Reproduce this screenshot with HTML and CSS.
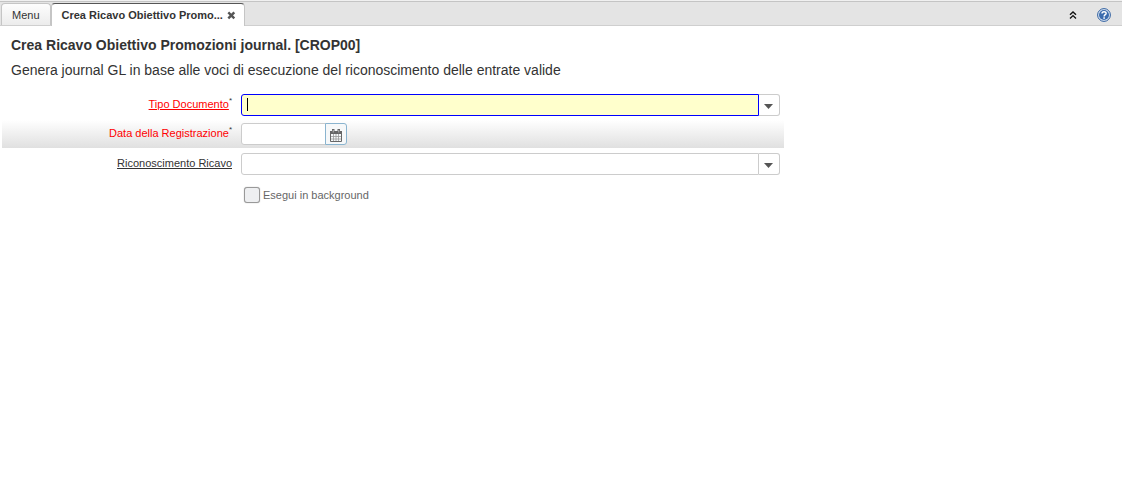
FILE: index.html
```html
<!DOCTYPE html>
<html lang="it">
<head>
<meta charset="utf-8">
<title>Crea Ricavo Obiettivo Promozioni journal</title>
<link rel="stylesheet" href="styles.css">
</head>
<body>
<header class="tabbar">
  <nav class="tabs">
    <button class="tab" type="button">Menu</button>
    <div class="tab tab-active">
      <button class="tab-title" type="button">Crea Ricavo Obiettivo Promo...</button>
      <button class="tab-close" type="button" aria-label="Chiudi">
        <svg width="9" height="9" viewBox="0 0 9 9"><path d="M1.3 1.3 7.3 7.3M7.3 1.3 1.3 7.3" stroke="#555" stroke-width="2.4"/></svg>
      </button>
    </div>
  </nav>
  <div class="tools">
    <button class="tool" type="button" aria-label="Comprimi">
      <svg width="8" height="8" viewBox="0 0 8 8"><path d="M1 3.8 4 1 7 3.8M1 7.4 4 4.6 7 7.4" fill="none" stroke="#111" stroke-width="1.4"/></svg>
    </button>
    <button class="tool" type="button" aria-label="Aiuto">
      <svg width="14" height="14" viewBox="0 0 14 14"><circle cx="7" cy="7" r="6.4" fill="#dfe8f4" stroke="#2f5f9f" stroke-width="1"/><circle cx="7" cy="7" r="5" fill="#3c6cae"/><path d="M5 5.6C5 3 9.2 3.100 9.100 5.400 9 6.700 7.100 6.800 7.100 8.500" fill="none" stroke="#fff" stroke-width="1.500"/><rect x="6.300" y="9.300" width="1.600" height="1.500" fill="#fff"/></svg>
    </button>
  </div>
</header>
<main class="content">
  <h1 class="title">Crea Ricavo Obiettivo Promozioni journal. [CROP00]</h1>
  <p class="description">Genera journal GL in base alle voci di esecuzione del riconoscimento delle entrate valide</p>
  <form class="form">
    <div class="row">
      <div class="label-cell"><label class="label required linked" for="doctype">Tipo Documento</label><sup class="mark">*</sup></div>
      <div class="combo">
        <input class="field field-focus" id="doctype" type="text">
        <button class="drop" type="button" aria-label="Apri elenco"><svg width="9" height="5" viewBox="0 0 9 5"><path d="M0 0H9L4.500 5Z" fill="#555"/></svg></button>
      </div>
    </div>
    <div class="row row-shaded">
      <div class="label-cell"><label class="label required" for="regdate">Data della Registrazione</label><sup class="mark">*</sup></div>
      <div class="combo combo-date">
        <input class="field" id="regdate" type="text">
        <button class="drop drop-date" type="button" aria-label="Calendario"><svg width="12" height="13" viewBox="0 0 12 13"><path d="M.5 4V12.500H11.500V4" fill="none" stroke="#666"/><path d="M1 7.500H11M1 10H11M3.500 5V12M6 5V12M8.500 5V12" fill="none" stroke="#999" stroke-width=".8"/><path d="M0 2H12V5H0ZM2 0H4.500V3H2ZM7.500 0H10V3H7.500Z" fill="#666"/><path d="M3.250 1V3.500M8.750 1V3.500" stroke="#ccc" stroke-width=".8"/></svg></button>
      </div>
    </div>
    <div class="row">
      <div class="label-cell"><label class="label linked" for="recognition">Riconoscimento Ricavo</label></div>
      <div class="combo">
        <input class="field" id="recognition" type="text">
        <button class="drop" type="button" aria-label="Apri elenco"><svg width="9" height="5" viewBox="0 0 9 5"><path d="M0 0H9L4.500 5Z" fill="#555"/></svg></button>
      </div>
    </div>
    <div class="row row-check">
      <input class="check" id="background" type="checkbox">
      <label class="check-label" for="background">Esegui in background</label>
    </div>
  </form>
</main>
</body>
</html>
```
FILE: styles.css
```css
* {
  box-sizing: border-box;
}

body {
  margin: 0;
  background: #fff;
  color: #333;
  font-family: "Liberation Sans", Arial, sans-serif;
  font-size: 11px;
}

button,
input {
  margin: 0;
  padding: 0;
  font: inherit;
  color: inherit;
}

button {
  border: 0;
  background: none;
}

svg {
  display: block;
}

.tabbar {
  display: flex;
  justify-content: space-between;
  height: 26px;
  padding: 1px 11px 0 1px;
  background: linear-gradient(#f0f0f0 1px, #c4c4c4 1px, #c4c4c4 2px, #e4e4e4 2px);
  border-bottom: 1px solid #cfcfcf;
}

.tabs {
  display: flex;
  align-items: flex-start;
  padding-top: 2px;
}

.tab {
  height: 22px;
  padding: 0 10px;
  border: 1px solid #c5c5c5;
  border-bottom: 0;
  border-radius: 4px 4px 0 0;
  background: linear-gradient(#fdfdfd, #ececec);
}

.tab-active {
  display: flex;
  align-items: center;
  gap: 4px;
  height: 23px;
  padding: 0 8px 0 10px;
  border-top-color: #555;
  background: #fff;
  font-weight: bold;
}

.tools {
  display: flex;
  align-items: center;
  gap: 20px;
  padding-top: 3px;
}

.content {
  padding: 9px 3px 9px 2px;
}

.title,
.description {
  margin: 0;
  padding-left: 9px;
  font-size: 14px;
  line-height: 20px;
}

.title {
  margin-bottom: 5px;
}

.form {
  width: 70%;
  padding-top: 11px;
}

.row {
  display: grid;
  grid-template-columns: 230px 1fr;
  column-gap: 9px;
  align-items: center;
  height: 28px;
  margin-bottom: 1px;
  padding-right: 4px;
}

.row-shaded {
  background: linear-gradient(#fff, #e0e0e0);
  margin-bottom: 2px;
}

.label-cell {
  display: flex;
  justify-content: flex-end;
  padding-bottom: 2px;
}

.required {
  color: #f00;
}

.linked {
  text-decoration: underline;
}

.mark {
  font-size: 8px;
  line-height: 6px;
}

.combo {
  display: flex;
  height: 22px;
}

.combo-date {
  width: 106px;
}

.field {
  flex: 1;
  min-width: 0;
  border: 1px solid #ccc;
  border-radius: 3px 0 0 3px;
  background: #fff;
  padding: 0 5px;
  outline: 0;
}

.field-focus {
  border-color: #00f;
  background: linear-gradient(#000, #000) 5px 3px / 1px 13px no-repeat, #ffc;
}

.drop {
  display: flex;
  align-items: center;
  justify-content: center;
  width: 21px;
  border: 1px solid #ccc;
  border-left: 0;
  border-radius: 0 3px 3px 0;
  background: #fff;
}

.drop svg {
  margin-top: 2px;
}

.drop-date {
  width: 22px;
  margin-left: -1px;
  border: 1px solid #8ab4cf;
  background: #f6f8f9;
}

.row-check {
  display: flex;
  gap: 3px;
  height: 32px;
  padding-left: 242px;
}

.check {
  appearance: none;
  width: 16px;
  height: 16px;
  border: 1px solid #999;
  border-radius: 3px;
  background: #eeeff1;
  box-shadow: 0 0 1px #999;
}

.check:checked {
  background: #9bb8d3;
}

.check-label {
  color: #666;
}
```
